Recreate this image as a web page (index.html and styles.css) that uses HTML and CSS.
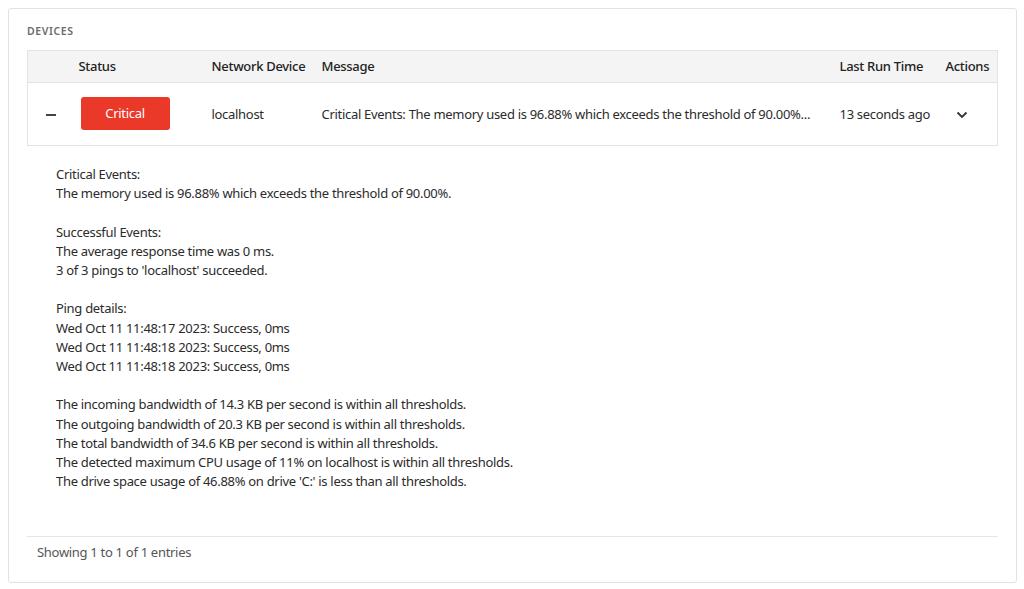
FILE: index.html
```html
<!DOCTYPE html>
<html>
<head>
    <title>Devices</title>
    <link rel="stylesheet" href="styles.css">
</head>
<body>
    <div class="card">
        <h4 class="card-title">Devices</h4>
        <table class="devices">
            <colgroup>
                <col class="col-toggle">
                <col class="col-status">
                <col class="col-device">
                <col class="col-message">
                <col class="col-time">
                <col class="col-actions">
            </colgroup>
            <thead>
                <tr>
                    <th></th>
                    <th>Status</th>
                    <th>Network Device</th>
                    <th>Message</th>
                    <th>Last Run Time</th>
                    <th>Actions</th>
                </tr>
            </thead>
            <tbody>
                <tr>
                    <td class="toggle"><span class="minus"></span></td>
                    <td><span class="badge critical">Critical</span></td>
                    <td>localhost</td>
                    <td class="message">Critical Events: The memory used is 96.88% which exceeds the threshold of 90.00%...</td>
                    <td>13 seconds ago</td>
                    <td class="actions">
                        <svg width="12" height="8" viewBox="0 0 12 8"><path d="M1.5 1.5 L6 6 L10.5 1.5" fill="none" stroke="#333" stroke-width="1.8"/></svg>
                    </td>
                </tr>
            </tbody>
        </table>

        <div class="details">Critical Events:
The memory used is 96.88% which exceeds the threshold of 90.00%.

Successful Events:
The average response time was 0 ms.
3 of 3 pings to 'localhost' succeeded.

Ping details:
Wed Oct 11 11:48:17 2023: Success, 0ms
Wed Oct 11 11:48:18 2023: Success, 0ms
Wed Oct 11 11:48:18 2023: Success, 0ms

The incoming bandwidth of 14.3 KB per second is within all thresholds.
The outgoing bandwidth of 20.3 KB per second is within all thresholds.
The total bandwidth of 34.6 KB per second is within all thresholds.
The detected maximum CPU usage of 11% on localhost is within all thresholds.
The drive space usage of 46.88% on drive 'C:' is less than all thresholds.</div>

        <div class="footer">Showing 1 to 1 of 1 entries</div>
    </div>
</body>
</html>
```

FILE: styles.css
```css
body {
    margin: 8px 7px 8px 8px;
    font-family: "Noto Sans", Arial, sans-serif;
    font-size: 13px;
    letter-spacing: -0.3px;
    color: #2b2b2b;
    background: #fff;
}
.card {
    border: 1px solid #e2e2e2;
    border-radius: 3px;
    padding: 14px 18px 0 18px;
    height: 575px;
    box-sizing: border-box;
}
.card-title {
    margin: 0 0 11px 0;
    font-size: 10.5px;
    font-weight: 600;
    letter-spacing: 0.6px;
    text-transform: uppercase;
    color: #6b6b6b;
    line-height: 16px;
}
.devices {
    width: 100%;
    border-collapse: collapse;
    table-layout: fixed;
    border: 1px solid #e3e3e3;
}
.col-toggle { width: 43px; }
.col-status { width: 133px; }
.col-device { width: 110px; }
.col-message { width: 518px; }
.col-time { width: 106px; }
.devices th {
    background: #f4f4f4;
    font-weight: 500;
    text-align: left;
    height: 32px;
    padding: 0 8px 2px 8px;
    box-sizing: border-box;
    border-bottom: 1px solid #e3e3e3;
    color: #222;
    white-space: nowrap;
}
.devices td {
    height: 63px;
    padding: 0 8px 1px 8px;
    box-sizing: border-box;
    white-space: nowrap;
    overflow: hidden;
}
.toggle {
    text-align: center;
}
.minus {
    display: inline-block;
    width: 10px;
    height: 2px;
    background: #444;
    vertical-align: middle;
    margin-left: 3px;
}
.badge {
    display: inline-block;
    width: 89px;
    height: 33px;
    line-height: 33px;
    text-align: center;
    border-radius: 3px;
    margin-left: 2px;
}
.critical {
    background: #ea3829;
    color: #fff;
}
.message {
    text-overflow: ellipsis;
}
.actions svg {
    margin-left: 10px;
    vertical-align: middle;
}
.details {
    white-space: pre-line;
    line-height: 19.2px;
    padding: 19px 29px 0 29px;
    height: 371px;
    color: #2b2b2b;
}
.footer {
    border-top: 1px solid #e6e6e6;
    padding: 7px 10px;
    line-height: 17px;
    color: #555;
}
```
